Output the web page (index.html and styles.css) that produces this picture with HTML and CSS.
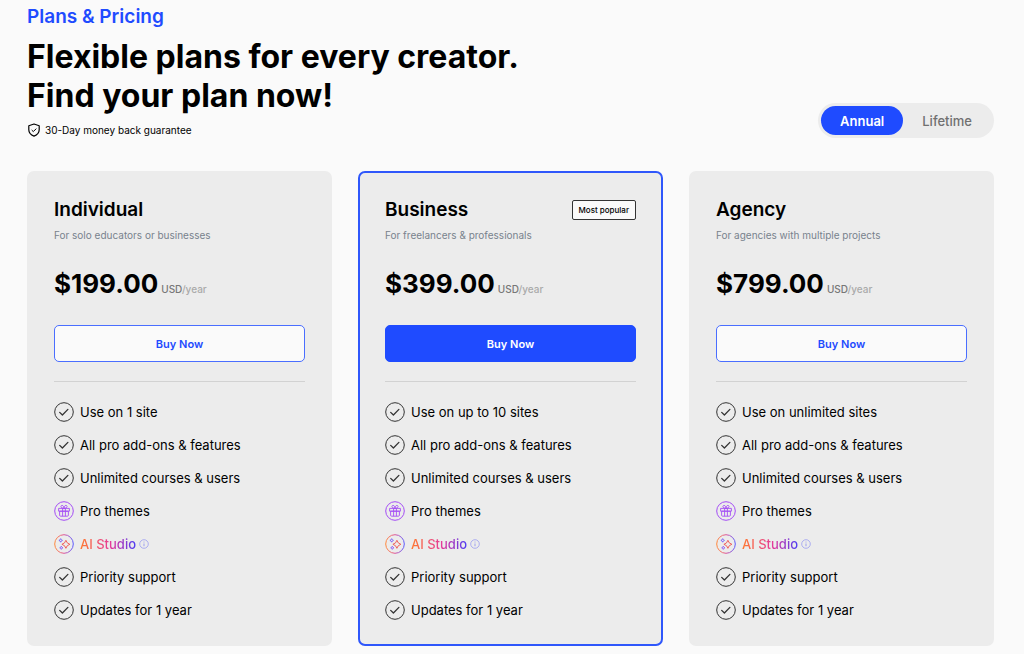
FILE: index.html
```
<!DOCTYPE html>
<html lang="en">
<head>
  <meta charset="utf-8">
  <meta name="viewport" content="width=device-width, initial-scale=1">
  <title>Plans &amp; Pricing</title>
  <link rel="stylesheet" href="styles.css">
</head>
<body>
  <!-- Shared icons -->
  <svg class="sprite" width="0" height="0" aria-hidden="true">
    <defs>
      <linearGradient id="warm" x1="0" y1="0" x2="1" y2="0">
        <stop offset="0" stop-color="#ff8a3c"/>
        <stop offset="0.5" stop-color="#e0559a"/>
        <stop offset="1" stop-color="#5b5bff"/>
      </linearGradient>
    </defs>
    <symbol id="check" viewBox="0 0 20 20" fill="none" stroke="currentColor">
      <circle cx="10" cy="10" r="9.3"/>
      <path d="M5.7 10.4l2.7 2.6 5.5-5.6" stroke-width="1.3" stroke-linecap="round" stroke-linejoin="round"/>
    </symbol>
    <symbol id="gift" viewBox="0 0 20 20" fill="none" stroke="currentColor">
      <circle cx="10" cy="10" r="9.3"/>
      <path d="M4.6 7.4h10.8v2.8H4.600zM5.600 10.200h8.800v4q0 1-1 1H6.600q-1 0-1-1zM8.600 7.400v7.800M11.400 7.400v7.800M10 7.300c-3.700 0-3.700-2.900-1.900-2.900 1.200 0 1.900 1.300 1.900 2.900zM10 7.300c3.700 0 3.700-2.900 1.900-2.900-1.200 0-1.900 1.300-1.900 2.900z" stroke-width="0.9" stroke-linejoin="round"/>
    </symbol>
    <symbol id="spark" viewBox="0 0 20 20" fill="none">
      <circle cx="10" cy="10" r="9.3" stroke="url(#warm)"/>
      <path d="M11.900 6.300q.8 3.200 4 4-3.200.8-4 4-.8-3.200-4-4 3.200-.8 4-4z" stroke="#f0605c" stroke-linejoin="round"/>
      <path d="M6.700 4.600q.3 1.500 1.800 1.800-1.500.3-1.800 1.800-.3-1.500-1.800-1.800 1.500-.3 1.800-1.800z" stroke="#7a63f5" stroke-width="0.900" stroke-linejoin="round"/>
      <path d="M7.300 12.200q.3 1.300 1.600 1.600-1.300.3-1.600 1.600-.3-1.300-1.600-1.600 1.300-.3 1.600-1.600z" stroke="#8b5cf6" stroke-width="0.900" stroke-linejoin="round"/>
    </symbol>
    <symbol id="info" viewBox="0 0 10 10" fill="none" stroke="currentColor">
      <circle cx="5" cy="5" r="4.300" stroke-width="0.800"/>
      <path d="M5 4.500v2.700M5 2.600v.9"/>
    </symbol>
  </svg>

  <main class="pricing">
    <header class="top">
      <div>
        <p class="eyebrow">Plans &amp; Pricing</p>
        <h1>Flexible plans for every creator.<br>Find your plan now!</h1>
        <p class="guarantee">
          <svg width="14" height="14" viewBox="0 0 14 14" fill="none" stroke="currentColor" stroke-linejoin="round" aria-hidden="true">
            <path d="M7 1l5.200 1.700v4.100c0 3-2.200 5.200-5.200 6.300-3-1.100-5.200-3.300-5.200-6.300V2.700z" stroke-width="1.200"/>
            <path d="M4.700 7l1.600 1.600 3-3"/>
          </svg>
          30-Day money back guarantee
        </p>
      </div>
      <div class="toggle">
        <button type="button" class="active" aria-pressed="true">Annual</button>
        <button type="button" aria-pressed="false">Lifetime</button>
      </div>
    </header>

    <div class="plans">
      <section class="card">
        <div class="card-head">
          <h2>Individual</h2>
        </div>
        <p class="desc">For solo educators or businesses</p>
        <p class="price">$199.00 <span class="unit">USD<span class="per">/year</span></span></p>
        <button type="button" class="buy">Buy Now</button>
        <ul class="features">
          <li><svg class="icon"><use href="#check"/></svg>Use on 1 site</li>
          <li><svg class="icon"><use href="#check"/></svg>All pro add-ons &amp; features</li>
          <li><svg class="icon"><use href="#check"/></svg>Unlimited courses &amp; users</li>
          <li><svg class="icon gift"><use href="#gift"/></svg>Pro themes</li>
          <li><svg class="icon"><use href="#spark"/></svg><span class="ai">AI Studio</span><svg class="info"><use href="#info"/></svg></li>
          <li><svg class="icon"><use href="#check"/></svg>Priority support</li>
          <li><svg class="icon"><use href="#check"/></svg>Updates for 1 year</li>
        </ul>
      </section>

      <section class="card popular">
        <div class="card-head">
          <h2>Business</h2>
          <span class="badge">Most popular</span>
        </div>
        <p class="desc">For freelancers &amp; professionals</p>
        <p class="price">$399.00 <span class="unit">USD<span class="per">/year</span></span></p>
        <button type="button" class="buy">Buy Now</button>
        <ul class="features">
          <li><svg class="icon"><use href="#check"/></svg>Use on up to 10 sites</li>
          <li><svg class="icon"><use href="#check"/></svg>All pro add-ons &amp; features</li>
          <li><svg class="icon"><use href="#check"/></svg>Unlimited courses &amp; users</li>
          <li><svg class="icon gift"><use href="#gift"/></svg>Pro themes</li>
          <li><svg class="icon"><use href="#spark"/></svg><span class="ai">AI Studio</span><svg class="info"><use href="#info"/></svg></li>
          <li><svg class="icon"><use href="#check"/></svg>Priority support</li>
          <li><svg class="icon"><use href="#check"/></svg>Updates for 1 year</li>
        </ul>
      </section>

      <section class="card">
        <div class="card-head">
          <h2>Agency</h2>
        </div>
        <p class="desc">For agencies with multiple projects</p>
        <p class="price">$799.00 <span class="unit">USD<span class="per">/year</span></span></p>
        <button type="button" class="buy">Buy Now</button>
        <ul class="features">
          <li><svg class="icon"><use href="#check"/></svg>Use on unlimited sites</li>
          <li><svg class="icon"><use href="#check"/></svg>All pro add-ons &amp; features</li>
          <li><svg class="icon"><use href="#check"/></svg>Unlimited courses &amp; users</li>
          <li><svg class="icon gift"><use href="#gift"/></svg>Pro themes</li>
          <li><svg class="icon"><use href="#spark"/></svg><span class="ai">AI Studio</span><svg class="info"><use href="#info"/></svg></li>
          <li><svg class="icon"><use href="#check"/></svg>Priority support</li>
          <li><svg class="icon"><use href="#check"/></svg>Updates for 1 year</li>
        </ul>
      </section>
    </div>
  </main>
</body>
</html>
```
FILE: styles.css
```
* {
  box-sizing: border-box;
}

body {
  margin: 0;
  background-color: #fafafa;
  color: #000;
  font-family: Inter, sans-serif;
  font-size: 13px;
}

h1,
h2,
p,
ul {
  margin: 0;
  padding: 0;
}

button {
  font-family: inherit;
  cursor: pointer;
}

.sprite {
  position: absolute;
}

.pricing {
  padding: 5px 30px 8px 27px;
}

.top {
  display: flex;
  justify-content: space-between;
  align-items: flex-end;
  margin-bottom: 33px;
}

.eyebrow {
  color: #1f4bff;
  font-size: 19px;
  font-weight: 600;
  line-height: 24px;
}

h1 {
  margin: 8px 0 7px;
  font-size: 32px;
  font-weight: 700;
  line-height: 39px;
}

.guarantee {
  display: flex;
  align-items: center;
  gap: 4px;
  font-size: 10px;
  line-height: 16px;
}

.toggle {
  display: flex;
  padding: 3px;
  border-radius: 18px;
  background-color: #ececec;
}

.toggle button {
  height: 29px;
  padding: 0 19px;
  border: none;
  border-radius: 15px;
  background-color: transparent;
  color: #707070;
  font-size: 13px;
  font-weight: 500;
}

.toggle .active {
  background-color: #1f4bff;
  color: #fff;
  font-weight: 600;
}

.plans {
  display: grid;
  grid-template-columns: repeat(3, 1fr);
  gap: 26px;
}

.card {
  padding: 24px 25px;
  border: 2px solid #ececec;
  border-radius: 7px;
  background-color: #ececec;
}

.popular {
  border-color: #2f57fb;
}

.card-head {
  display: flex;
  justify-content: space-between;
  align-items: center;
  height: 26px;
}

h2 {
  font-size: 19px;
  font-weight: 600;
  line-height: 24px;
}

.badge {
  padding: 0 6px;
  border: 1px solid #333;
  border-radius: 2px;
  background-color: #fafafa;
  font-size: 8px;
  font-weight: 500;
  line-height: 18px;
}

.desc {
  margin-top: 4px;
  color: #78828c;
  font-size: 10px;
  line-height: 16px;
}

.price {
  display: flex;
  align-items: baseline;
  gap: 3px;
  margin: 25px 0;
  font-size: 26px;
  font-weight: 700;
  line-height: 32px;
}

.unit {
  color: #777;
  font-size: 10px;
  font-weight: 500;
  line-height: 16px;
}

.per {
  color: #aaa;
}

.buy {
  display: block;
  width: 100%;
  height: 37px;
  border: 1px solid #4a6eff;
  border-radius: 5px;
  background-color: #fafafa;
  color: #1f4bff;
  font-size: 11px;
  font-weight: 600;
}

.popular .buy {
  border-color: #1f4bff;
  background-color: #1f4bff;
  color: #fff;
}

.features {
  display: flex;
  flex-direction: column;
  gap: 13px;
  margin-top: 19px;
  padding-top: 20px;
  border-top: 1px solid #d2d2d2;
  list-style: none;
}

.features li {
  display: flex;
  align-items: center;
  gap: 6px;
  line-height: 20px;
}

.icon {
  flex: none;
  width: 20px;
  height: 20px;
  color: #333;
}

.gift {
  color: #a44df5;
}

.ai {
  background: linear-gradient(90deg, #ff7a2f, #e5399b 55%, #4a3cf5);
  -webkit-background-clip: text;
  background-clip: text;
  color: transparent;
  font-weight: 500;
}

.info {
  width: 10px;
  height: 10px;
  margin-left: -3px;
  color: #9a9df0;
}
```
